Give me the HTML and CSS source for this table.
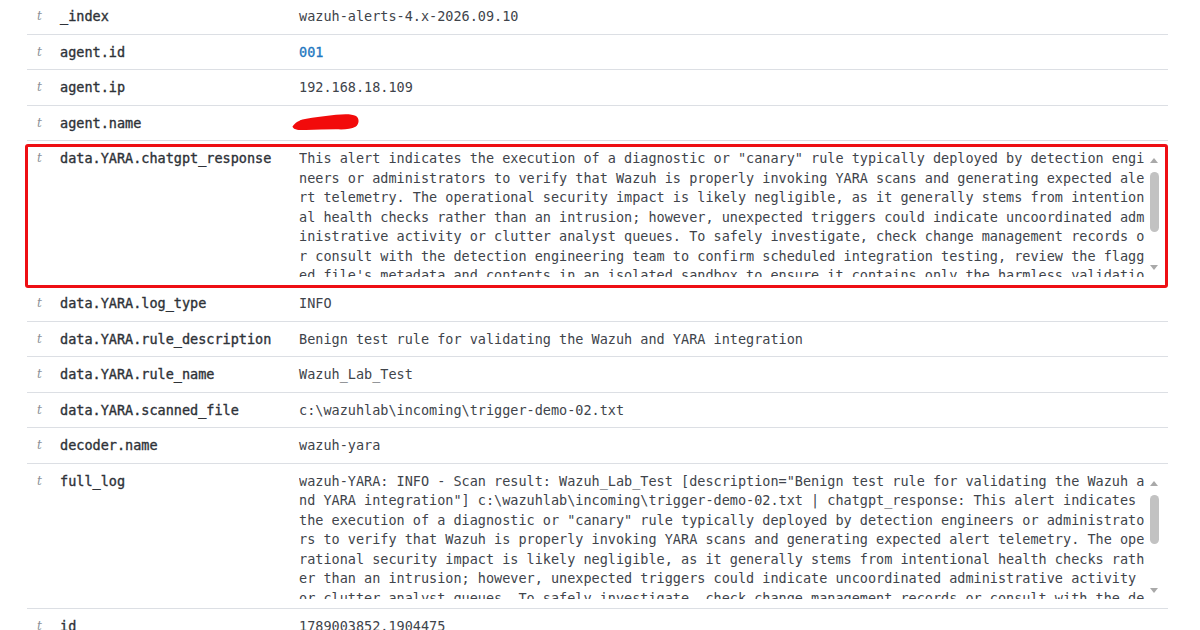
FILE: index.html
```html
<!DOCTYPE html>
<html lang="en">
<head>
<meta charset="utf-8">
<title>Wazuh alert document</title>
<link rel="stylesheet" href="styles.css">
</head>
<body>
<div class="doc">
  <div class="row">
    <span class="type">t</span>
    <span class="field">_index</span>
    <div class="value">wazuh-alerts-4.x-2026.09.10</div>
  </div>
  <div class="row">
    <span class="type">t</span>
    <span class="field">agent.id</span>
    <div class="value link">001</div>
  </div>
  <div class="row">
    <span class="type">t</span>
    <span class="field">agent.ip</span>
    <div class="value">192.168.18.109</div>
  </div>
  <div class="row">
    <span class="type">t</span>
    <span class="field">agent.name</span>
    <div class="value redacted">
      <span class="link hidden-name">agent</span>
      <svg class="scribble" width="68" height="18" viewBox="0 0 68 18" aria-hidden="true">
        <path d="M0.5 13.5 C 3 10, 7 7, 13 6 C 22 4.5, 33 3, 44 1.8 C 53 1, 60 1, 64 3 C 67.5 5.5, 67.5 11, 63.5 13.8 C 59 16.5, 52 16.5, 44 16.3 C 34 16.3, 24 16.8, 14 17 C 7 17.3, 1.5 17, 0.5 13.5 Z" fill="#f20b0b"/>
      </svg>
    </div>
  </div>
  <div class="row row-long marked">
    <span class="type">t</span>
    <span class="field">data.YARA.chatgpt_response</span>
    <div class="value">
      <div class="scroller">
        <div class="scroll-text">This alert indicates the execution of a diagnostic or "canary" rule typically deployed by detection engineers or administrators to verify that Wazuh is properly invoking YARA scans and generating expected alert telemetry. The operational security impact is likely negligible, as it generally stems from intentional health checks rather than an intrusion; however, unexpected triggers could indicate uncoordinated administrative activity or clutter analyst queues. To safely investigate, check change management records or consult with the detection engineering team to confirm scheduled integration testing, review the flagged file's metadata and contents in an isolated sandbox to ensure it contains only the harmless validation string, and tune or suppress the rule if it fires outside approved testing windows.</div>
        <div class="scrollbar">
          <span class="arrow up"></span>
          <span class="thumb" style="height: 60px"></span>
          <span class="arrow down"></span>
        </div>
      </div>
    </div>
  </div>
  <div class="row">
    <span class="type">t</span>
    <span class="field">data.YARA.log_type</span>
    <div class="value">INFO</div>
  </div>
  <div class="row">
    <span class="type">t</span>
    <span class="field">data.YARA.rule_description</span>
    <div class="value">Benign test rule for validating the Wazuh and YARA integration</div>
  </div>
  <div class="row">
    <span class="type">t</span>
    <span class="field">data.YARA.rule_name</span>
    <div class="value">Wazuh_Lab_Test</div>
  </div>
  <div class="row">
    <span class="type">t</span>
    <span class="field">data.YARA.scanned_file</span>
    <div class="value">c:\wazuhlab\incoming\trigger-demo-02.txt</div>
  </div>
  <div class="row">
    <span class="type">t</span>
    <span class="field">decoder.name</span>
    <div class="value">wazuh-yara</div>
  </div>
  <div class="row row-long">
    <span class="type">t</span>
    <span class="field">full_log</span>
    <div class="value">
      <div class="scroller">
        <div class="scroll-text">wazuh-YARA: INFO - Scan result: Wazuh_Lab_Test [description="Benign test rule for validating the Wazuh and YARA integration"] c:\wazuhlab\incoming\trigger-demo-02.txt | chatgpt_response: This alert indicates the execution of a diagnostic or "canary" rule typically deployed by detection engineers or administrators to verify that Wazuh is properly invoking YARA scans and generating expected alert telemetry. The operational security impact is likely negligible, as it generally stems from intentional health checks rather than an intrusion; however, unexpected triggers could indicate uncoordinated administrative activity or clutter analyst queues. To safely investigate, check change management records or consult with the detection engineering team to confirm scheduled integration testing, review the flagged file's metadata and contents in an isolated sandbox to ensure it contains only the harmless validation string.</div>
        <div class="scrollbar">
          <span class="arrow up"></span>
          <span class="thumb" style="height: 49px"></span>
          <span class="arrow down"></span>
        </div>
      </div>
    </div>
  </div>
  <div class="row">
    <span class="type">t</span>
    <span class="field">id</span>
    <div class="value">1789003852.1904475</div>
  </div>
</div>
</body>
</html>
```
FILE: styles.css
```css
html, body {
  margin: 0;
  padding: 0;
  background: #ffffff;
  overflow: hidden;
}

body {
  width: 1200px;
  height: 630px;
  font-family: "DejaVu Sans Mono", "Liberation Mono", monospace;
  font-size: 13.5px;
  color: #3d4148;
}

.doc {
  margin: -1px 32px 0 27px;
  display: flex;
  flex-direction: column;
}

.row {
  display: grid;
  grid-template-columns: 33px 239px 1fr;
  align-items: start;
  padding: 8px 0 7px;
  line-height: 19.5px;
  border-bottom: 1px solid #dcdfe4;
}

.row-long {
  padding-bottom: 8.5px;
}

.marked {
  position: relative;
}

.marked::after {
  content: "";
  position: absolute;
  left: -2px;
  right: 0;
  top: 3px;
  bottom: -3px;
  border: 3px solid #ee0f14;
  border-radius: 3px;
  pointer-events: none;
}

.type {
  font-family: "DejaVu Serif", "Liberation Serif", serif;
  font-style: italic;
  font-size: 12px;
  color: #8a9098;
  padding-left: 10px;
}

.field {
  color: #2e3238;
  -webkit-text-stroke: 0.35px #2e3238;
  white-space: nowrap;
}

.value {
  color: #40444b;
  white-space: nowrap;
}

.link {
  color: #1f78c1;
  -webkit-text-stroke: 0.3px #1f78c1;
}

.redacted {
  position: relative;
}

.hidden-name {
  display: inline-block;
  clip-path: inset(0 0 50% 0);
}

.scribble {
  position: absolute;
  left: -7px;
  top: -1px;
}

.scroller {
  display: flex;
  height: 127.5px;
  overflow: hidden;
}

.scroll-text {
  width: calc(104ch + 1px);
  white-space: normal;
  word-break: break-all;
  overflow: hidden;
}

.scrollbar {
  width: 18px;
  display: flex;
  flex-direction: column;
  align-items: center;
  padding: 9px 0 6.5px;
  box-sizing: border-box;
}

.arrow {
  width: 0;
  height: 0;
  border-left: 4px solid transparent;
  border-right: 4px solid transparent;
}

.arrow.up {
  border-bottom: 5px solid #a9a9a9;
  margin-bottom: 9px;
}

.arrow.down {
  border-top: 5px solid #a9a9a9;
  margin-top: auto;
}

.thumb {
  width: 9px;
  border-radius: 5px;
  background: #c2c2c2;
}
```
